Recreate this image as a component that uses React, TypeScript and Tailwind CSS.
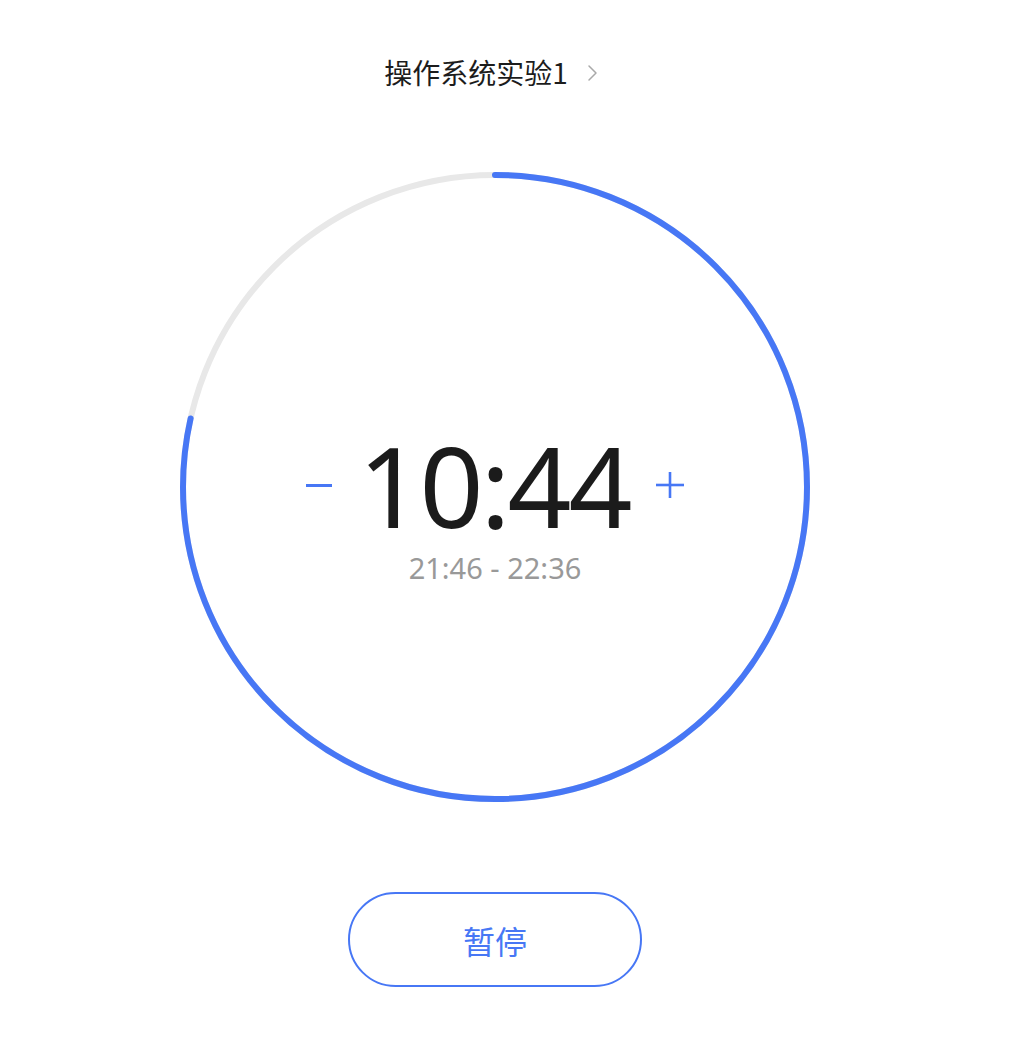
import React from "react";

const BLUE = "#4777F5";

export default function App() {
  const r = 312;
  const c = 2 * Math.PI * r;
  const progress = 0.785;
  return (
    <div className="min-h-[1040px] w-full bg-white" style={{ fontFamily: '"Noto Sans", "Noto Sans CJK SC", sans-serif' }}>
      <div className="flex w-[990px] flex-col items-center pt-[50px]">
        <div className="flex h-[44px] items-center gap-[18px] pr-[8px]">
          <span className="text-[28px] leading-none text-[#1c1c1c]" style={{ fontFamily: '"Noto Sans CJK SC", sans-serif' }}>
            操作系统实验1
          </span>
          <svg width="12" height="18" viewBox="0 0 12 18" className="mt-[2px]">
            <polyline points="3,2 10,9 3,16" fill="none" stroke="#a9a9a9" strokeWidth="1.5" strokeLinecap="round" strokeLinejoin="round" />
          </svg>
        </div>

        <div className="relative mt-[73px] h-[640px] w-[640px]">
          <svg width="640" height="640" viewBox="0 0 640 640" className="absolute inset-0">
            <circle cx="320" cy="320" r={r} fill="none" stroke="#e8e8e8" strokeWidth="6" />
            <circle
              cx="320"
              cy="320"
              r={r}
              fill="none"
              stroke={BLUE}
              strokeWidth="6"
              strokeLinecap="round"
              strokeDasharray={`${c * progress} ${c}`}
              transform="rotate(-90 320 320)"
            />
          </svg>
          <div className="absolute inset-0 flex flex-col items-center justify-center pt-[41px]">
            <div className="flex items-center">
              <div className="h-[3px] w-[26px]" style={{ backgroundColor: BLUE }} />
              <span className="ml-[26px] mr-[26px] text-[112px] leading-[110px] tracking-[-3px] text-[#1b1b1b]">10:44</span>
              <svg width="28" height="28" viewBox="0 0 28 28">
                <line x1="0" y1="14" x2="28" y2="14" stroke={BLUE} strokeWidth="2.6" />
                <line x1="14" y1="1" x2="14" y2="27" stroke={BLUE} strokeWidth="2.6" />
              </svg>
            </div>
            <div className="mt-[11px] text-[29px] leading-[34px] text-[#999999]">21:46 - 22:36</div>
          </div>
        </div>

        <button
          className="mt-[85px] flex h-[95px] w-[294px] items-center justify-center rounded-full border-2 bg-white text-[32px]"
          style={{ borderColor: BLUE, color: BLUE, fontFamily: '"Noto Sans CJK SC", sans-serif' }}
        >
          暂停
        </button>
      </div>
    </div>
  );
}
